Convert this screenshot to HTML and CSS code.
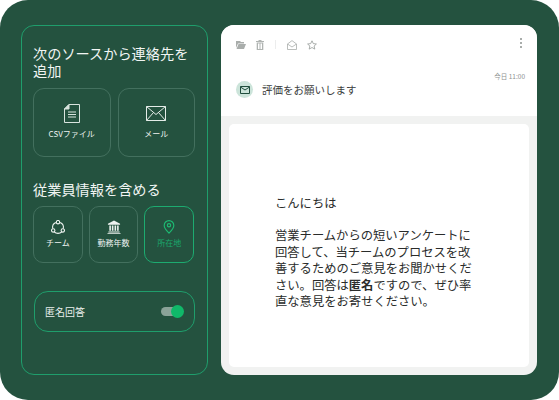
FILE: index.html
```html
<!DOCTYPE html>
<html lang="ja">
<head>
  <meta charset="UTF-8" />
  <meta name="viewport" content="width=device-width, initial-scale=1" />
  <title>評価をお願いします</title>
  <link rel="stylesheet" href="styles.css">
</head>
<body>
  <div class="stage">
    <aside class="panel">
      <h2 class="panel-title">次のソースから連絡先を追加</h2>
      <div class="sources">
        <div class="tile">
          <svg width="16" height="19" viewBox="0 0 16 19" fill="none" stroke="#d9e4de" stroke-width="1">
            <path d="M5 .5H15.5V18.5H.5V5Z"/>
            <path d="M.5 5H5V.5Z" fill="#d9e4de"/>
            <path d="M4 8H12M4 10.5H12M4 13H12"/>
          </svg>
          <span>CSVファイル</span>
        </div>
        <div class="tile">
          <svg width="20" height="15" viewBox="0 0 20 15" fill="none" stroke="#e4ece8" stroke-width="1">
            <path d="M.5.5H19.5V14.5H.5Z"/>
            <path d="M.5.5 10 8.5 19.5.5M.5 14.5 7.5 6.5M19.5 14.5 12.5 6.5"/>
          </svg>
          <span>メール</span>
        </div>
      </div>

      <h2 class="panel-title second">従業員情報を含める</h2>
      <div class="fields">
        <div class="tile small">
          <svg width="14" height="14" viewBox="0 0 14 14" fill="none" stroke="#eef3f0" stroke-width="1.1">
            <path d="M4.9 2.6A5.4 5.4 0 0 0 1.7 8.6M9.1 2.6A5.4 5.4 0 0 1 12.3 8.6M3.2 11.8A5.4 5.4 0 0 0 10.8 11.8"/>
            <circle cx="7" cy="2.2" r="1.7"/>
            <circle cx="2.2" cy="10.4" r="1.7"/>
            <circle cx="11.8" cy="10.4" r="1.7"/>
          </svg>
          <span>チーム</span>
        </div>
        <div class="tile small">
          <svg width="14" height="14" viewBox="0 0 15 15" fill="#eef3f0">
            <path d="M7.5.5 14 4V5H1V4Z"/>
            <path d="M2.5 6H4.2V11.5H2.5ZM5.2 6H6.9V11.5H5.2ZM8.1 6H9.8V11.5H8.1ZM10.8 6H12.5V11.5H10.8ZM1.5 12.3H13.5V13.3H1.5ZM.5 13.8H14.5V14.8H.5Z"/>
          </svg>
          <span>勤務年数</span>
        </div>
        <div class="tile small active">
          <svg width="12" height="14" viewBox="0 0 13 16" fill="none" stroke="#1dbb73" stroke-width="1.3">
            <path d="M6.5 15C3 11.5 1 9 1 6.2A5.5 5.5 0 0 1 12 6.2C12 9 10 11.5 6.5 15Z"/>
            <circle cx="6.5" cy="6" r="1.9"/>
          </svg>
          <span>所在地</span>
        </div>
      </div>

      <div class="toggle-row">
        <span>匿名回答</span>
        <div class="toggle"><i></i></div>
      </div>
    </aside>

    <main class="mail">
      <div class="mail-head">
        <div class="toolbar">
          <svg class="tool" width="10" height="8" viewBox="0 0 10 8" fill="#a9adab"><path d="M0 0H4L5 1H8V2.5H2L0 7ZM2.5 3H10L8 8H.5Z"/></svg>
          <svg class="tool" width="8" height="10" viewBox="0 0 8 10" fill="#b0b4b2"><path d="M0 1H2.5V0H5.5V1H8V2H0ZM.7 2.6H7.3V10H.7ZM2 3.6V9H3V3.6ZM3.5 3.6V9H4.5V3.6ZM5 3.6V9H6V3.6Z"/></svg>
          <div class="sep"></div>
          <svg class="tool" width="10" height="10" viewBox="0 0 10 10" fill="none" stroke="#a9adab" stroke-width=".8"><path d="M.5 4 5 .6 9.5 4V9.5H.5ZM.5 4 5 7 9.5 4"/></svg>
          <svg class="tool" width="10" height="10" viewBox="0 0 10 10" fill="none" stroke="#969a98" stroke-width=".8"><path d="M5 .8 6.3 3.6 9.4 4 7.1 6 7.8 9.1 5 7.5 2.2 9.1 2.9 6 .6 4 3.7 3.6Z"/></svg>
          <div class="kebab"><i></i><i></i><i></i></div>
        </div>
        <div class="time">今日 11:00</div>
        <div class="subject">
          <div class="subject-icon">
            <svg width="10" height="8" viewBox="0 0 10 8" fill="none" stroke="#1f4d3c" stroke-width="1"><path d="M.5.5H9.5V7.5H.5ZM.5 1 5 4 9.5 1"/></svg>
          </div>
          <span>評価をお願いします</span>
        </div>
      </div>
      <div class="mail-body">
        <div class="letter">
          <p>こんにちは</p>
          <p>営業チームからの短いアンケートに回答して、当チームのプロセスを改善するためのご意見をお聞かせください。回答は<b>匿名</b>ですので、ぜひ率直な意見をお寄せください。</p>
        </div>
      </div>
    </main>
  </div>
</body>
</html>
```

FILE: styles.css
```css
* { box-sizing: border-box; margin: 0; padding: 0; }
html, body {
  width: 559px;
  height: 400px;
  overflow: hidden;
  background: #fff;
  font-family: "Noto Sans CJK JP", "Noto Sans", sans-serif;
}

.stage {
  width: 559px;
  height: 400px;
  display: flex;
  gap: 13px;
  padding: 25px 22px 25px 21px;
  background: #24523f;
  border-radius: 28px;
}

/* left column */
.panel {
  width: 187px;
  height: 350px;
  padding: 19px 12px 0 11px;
  border: 1px solid #1f9e6c;
  border-radius: 13px;
  color: #eef3f0;
}
.panel-title {
  font-size: 14.2px;
  font-weight: 400;
  line-height: 17px;
  color: #f1f5f3;
}
.panel-title.second { margin-top: 24px; }

.sources {
  display: flex;
  gap: 7px;
  margin-top: 9px;
}
.fields {
  display: flex;
  gap: 6px;
  margin: 8px 1px 0 0;
}
.tile {
  flex: 1;
  height: 69px;
  padding-top: 15px;
  display: flex;
  flex-direction: column;
  align-items: center;
  border: 1px solid #43705e;
  border-radius: 11px;
}
.tile svg { height: 19px; }
.tile span {
  margin-top: 5px;
  font-size: 8px;
  line-height: 12px;
  color: #eef3f0;
}
.tile.small {
  height: 57px;
  padding-top: 13px;
  border-radius: 10px;
}
.tile.small svg { height: 14px; }
.tile.small span { margin-top: 3px; }
.tile.active { border-color: #1dab70; }
.tile.active span { color: #1aa86c; }

.toggle-row {
  width: 161px;
  height: 41px;
  margin: 28px 0 0 1px;
  padding: 0 11px 0 10px;
  display: flex;
  align-items: center;
  justify-content: space-between;
  border: 1px solid #1f9e6c;
  border-radius: 14px;
  font-size: 10px;
  color: #e8eeeb;
}
.toggle {
  position: relative;
  width: 22px;
  height: 9px;
  border-radius: 5px;
  background: #8aa398;
}
.toggle i {
  position: absolute;
  top: -2px;
  right: -1px;
  width: 13px;
  height: 13px;
  border-radius: 50%;
  background: #10b869;
}

/* right column */
.mail {
  width: 316px;
  height: 350px;
  display: flex;
  flex-direction: column;
  overflow: hidden;
  background: #f1f2f1;
  border-radius: 13px;
}
.mail-head {
  height: 91px;
  padding: 14px 12px 0 15px;
  background: #fff;
}
.toolbar {
  display: flex;
  align-items: center;
  height: 11px;
}
.tool { flex: none; }
.toolbar .tool:nth-child(1) { margin-right: 10px; }
.toolbar .tool:nth-child(2) { margin-right: 11px; }
.toolbar .tool:nth-child(4) { margin-right: 10px; }
.sep {
  width: 1px;
  height: 9px;
  margin-right: 11px;
  background: #eceded;
}
.kebab {
  margin: -3px 3px 0 auto;
  display: flex;
  flex-direction: column;
  gap: 2px;
}
.kebab i {
  width: 2px;
  height: 2px;
  background: #a9adab;
}
.time {
  margin-top: 21px;
  font-size: 6.5px;
  line-height: 10px;
  text-align: right;
  color: #8d9190;
}
.subject {
  display: flex;
  align-items: center;
  gap: 9px;
  font-size: 10.5px;
  color: #3a3d3c;
}
.subject-icon {
  width: 17px;
  height: 17px;
  display: flex;
  align-items: center;
  justify-content: center;
  border-radius: 50%;
  background: #cce4da;
}
.mail-body {
  flex: 1;
  padding: 8px;
}
.letter {
  height: 100%;
  padding: 71px 50px 0 46px;
  background: #fff;
  border-radius: 5px;
  font-size: 12.3px;
  line-height: 16.4px;
  color: #2a2c2b;
}
.letter p + p { margin-top: 16px; }
.letter b { font-weight: 700; }
```
